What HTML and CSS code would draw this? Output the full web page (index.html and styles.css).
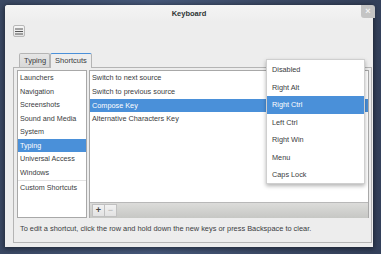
FILE: index.html
```html
<!DOCTYPE html>
<html lang="en">
  <head>
    <meta charset="UTF-8" />
    <title>Keyboard</title>
    <link rel="stylesheet" href="styles.css">
  </head>
  <body>
    <div class="window">
      <div class="titlebar">
        Keyboard
        <span class="close">&#215;</span>
      </div>
      <div class="content">
        <div class="menubtn">
          <svg width="8" height="7" viewBox="0 0 8 7"><path d="M0 1h8M0 3.5h8M0 6h8" stroke="#555" stroke-width="1"/></svg>
        </div>
        <div class="tabs">
          <div class="tab">Typing</div>
          <div class="tab active">Shortcuts</div>
        </div>
        <div class="notebook">
          <div class="panes">
            <ul class="sections">
              <li>Launchers</li>
              <li>Navigation</li>
              <li>Screenshots</li>
              <li>Sound and Media</li>
              <li>System</li>
              <li class="sel">Typing</li>
              <li>Universal Access</li>
              <li>Windows</li>
              <li class="custom">Custom Shortcuts</li>
            </ul>
            <div class="shortcuts">
              <ul class="rows">
                <li>Switch to next source</li>
                <li>Switch to previous source</li>
                <li class="sel">Compose Key</li>
                <li>Alternative Characters Key</li>
              </ul>
              <div class="toolbar">
                <span class="tbtn">+</span><span class="tbtn off">&#8722;</span>
              </div>
            </div>
          </div>
          <p class="hint">To edit a shortcut, click the row and hold down the new keys or press Backspace to clear.</p>
        </div>
      </div>
      <ul class="popup">
        <li>Disabled</li>
        <li>Right Alt</li>
        <li class="sel">Right Ctrl</li>
        <li>Left Ctrl</li>
        <li>Right Win</li>
        <li>Menu</li>
        <li>Caps Lock</li>
      </ul>
    </div>
  </body>
</html>
```
FILE: styles.css
```css
body {
  margin: 0;
  width: 381px;
  height: 254px;
  padding: 5px 0 0 5px;
  box-sizing: border-box;
  overflow: hidden;
  background: linear-gradient(90deg, #3a4863 0%, #46587a 40%, #3c4a66 70%, #33405a 100%);
  font-family: "Liberation Sans", Arial, sans-serif;
  color: #3a3c3e;
}

ul {
  list-style: none;
  margin: 0;
  padding: 0;
}

.window {
  position: relative;
  width: 368px;
  height: 242px;
  background-color: #ededed;
  border-radius: 3px 3px 0 0;
  box-shadow: 0 1px 5px 1px rgba(0, 0, 0, 0.45);
}

.titlebar {
  position: relative;
  height: 17px;
  line-height: 17px;
  text-align: center;
  font-size: 7.5px;
  font-weight: bold;
  color: #2e3436;
  background: linear-gradient(#f4f4f4, #ededed);
  border-radius: 3px 3px 0 0;
}

.close {
  position: absolute;
  right: -2px;
  top: 0;
  width: 14px;
  height: 13px;
  line-height: 12px;
  background-color: #c4c4c4;
  color: #f4f4f4;
  font-size: 9px;
  border-radius: 0 3px 0 3px;
}

.content {
  padding: 3px 6px 0 8px;
}

.menubtn {
  width: 10px;
  height: 10px;
  border: 1px solid #b8b8b8;
  border-radius: 2px;
  background: linear-gradient(#f6f6f6, #e4e4e4);
  display: flex;
  align-items: center;
  justify-content: center;
}

.tabs {
  display: flex;
  align-items: flex-end;
  margin-top: 15px;
  padding-left: 6px;
  height: 15px;
}

.tab {
  font-size: 7.5px;
  height: 13px;
  line-height: 14px;
  padding: 0 3px 0 4px;
  border: 1px solid #b4b4b4;
  border-bottom: none;
  border-radius: 2px 2px 0 0;
  background: linear-gradient(#e6e6e6, #d8d8d8);
}

.tab.active {
  height: 14px;
  padding: 0 4px;
  background-color: #ededed;
  background-image: none;
  border-top: 1px solid #4a90d9;
  margin-bottom: -1px;
  position: relative;
}

.notebook {
  width: 352px;
  height: 172px;
  border: 1px solid #b4b4b4;
  padding: 2px 2px 0 3px;
  box-sizing: content-box;
}

.panes {
  display: flex;
  gap: 2px;
  height: 148px;
}

.sections {
  width: 68px;
  background-color: white;
  border: 1px solid #a8a8a8;
  font-size: 7.2px;
}

.sections li {
  height: 13.5px;
  line-height: 13.5px;
  padding-left: 2px;
}

.sections .custom {
  border-top: 1px solid #e2e2e2;
  margin-top: 1px;
}

.sel {
  background-color: #4a90d9;
  color: white;
}

.shortcuts {
  flex: 1;
  display: flex;
  flex-direction: column;
  background-color: white;
  border: 1px solid #a8a8a8;
  border-bottom: none;
}

.rows {
  flex: 1;
  font-size: 7.3px;
}

.rows li {
  height: 13.8px;
  line-height: 13.8px;
  padding-left: 2px;
}

.toolbar {
  height: 15px;
  border-top: 1px solid #b8b8b8;
  background: linear-gradient(#dcdcda, #c6c7c4);
  display: flex;
  align-items: center;
  padding-left: 2px;
}

.tbtn {
  width: 11px;
  height: 11px;
  line-height: 11px;
  text-align: center;
  font-size: 9px;
  font-weight: bold;
  color: #444;
  background: linear-gradient(#f2f2f2, #e2e2e2);
  border: 1px solid #c0c0c0;
}

.tbtn.off {
  color: #b0b0b0;
  font-weight: normal;
  border-left: none;
}

.hint {
  margin: 0;
  font-size: 7.4px;
  line-height: 22px;
  padding-left: 3px;
}

.popup {
  position: absolute;
  left: 261px;
  top: 54px;
  width: 97px;
  padding-top: 1px;
  height: 122px;
  background-color: white;
  border: 1px solid #cfcfcf;
  box-shadow: 0 2px 4px rgba(0, 0, 0, 0.3);
  font-size: 7.3px;
}

.popup li {
  height: 17.5px;
  line-height: 17.5px;
  padding-left: 5px;
}
```
